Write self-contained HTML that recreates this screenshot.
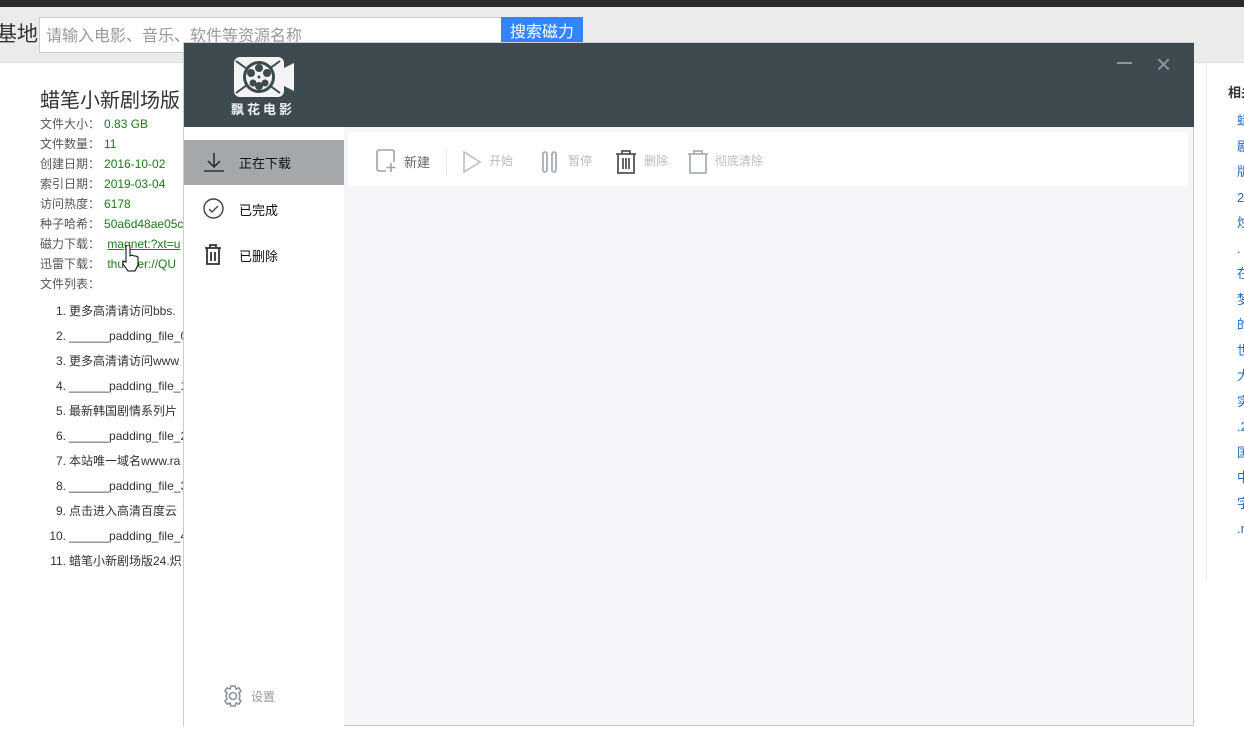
<!DOCTYPE html>
<html><head><meta charset="utf-8"><style>
*{margin:0;padding:0;box-sizing:border-box}
body{width:1244px;height:756px;overflow:hidden;background:#fff;font-family:"Liberation Sans","Noto Sans CJK SC",sans-serif;position:relative}
.a{position:absolute}
.lbl{font-size:12px;color:#555;line-height:20px;white-space:nowrap}
.lbl b{font-weight:normal;color:#1a7a1a;margin-left:4px}
.fl{font-size:12px;color:#333;line-height:25px}
.tb{font-size:12px;color:#bbb}
.r{font-size:13px;color:#1a6dc8;line-height:25.5px}
</style></head><body>
<div class="a" style="left:0;top:0;width:1244px;height:7px;background:#2b2b2b"></div>
<div class="a" style="left:0;top:7px;width:1244px;height:56px;background:#ebebeb;border-bottom:1px solid #ddd"></div>
<div class="a" style="left:-4px;top:18px;font-size:21px;color:#333">基地</div>
<div class="a" style="left:39px;top:17px;width:463px;height:36px;background:#fff;border:1px solid #ccc;font-size:16px;color:#999;padding:4px 6px">请输入电影、音乐、软件等资源名称</div>
<div class="a" style="left:501px;top:17px;width:82px;height:36px;background:#3385ff;color:#fff;font-size:16px;text-align:center;line-height:32px">搜索磁力</div>

<div class="a" style="left:40px;top:84px;font-size:20px;color:#333">蜡笔小新剧场版</div>
<div class="a lbl" style="left:40px;top:114px">文件大小：<b>0.83 GB</b><br>文件数量：<b>11</b><br>创建日期：<b>2016-10-02</b><br>索引日期：<b>2019-03-04</b><br>访问热度：<b>6178</b><br>种子哈希：<b>50a6d48ae05c</b><br>磁力下载： <b style="text-decoration:underline">magnet:?xt=u</b><br>迅雷下载： <b>thunder://QU</b><br>文件列表：</div>
<div class="a fl" style="left:46px;top:299px;text-align:right;width:20px">1.<br>2.<br>3.<br>4.<br>5.<br>6.<br>7.<br>8.<br>9.<br>10.<br>11.</div>
<div class="a fl" style="left:69px;top:299px;white-space:nowrap">更多高清请访问bbs.<br>______padding_file_0<br>更多高清请访问www<br>______padding_file_1<br>最新韩国剧情系列片<br>______padding_file_2<br>本站唯一域名www.ra<br>______padding_file_3<br>点击进入高清百度云<br>______padding_file_4<br>蜡笔小新剧场版24.炽</div>

<div class="a" style="left:1206px;top:63px;width:1px;height:518px;background:#e6e6e6"></div>
<div class="a" style="left:1228px;top:82px;font-size:13px;font-weight:bold;color:#333;white-space:nowrap">相关</div>
<div class="a r" style="left:1237px;top:108px">蜡<br>剧<br>版<br>2<br>烛<br>.<br>在<br>梦<br>的<br>世<br>大<br>实<br>.2<br>国<br>中<br>字<br>.m</div>

<div class="a" style="left:183px;top:42px;width:1011px;height:684px;border:1px solid #ccc;background:#f5f6fa">
 <div class="a" style="left:0;top:0;width:1010px;height:84px;background:#3d4a50"></div>
 <svg class="a" style="left:48px;top:12px" width="64" height="44" viewBox="0 0 64 44">
  <rect x="2" y="2" width="50" height="40" rx="6" fill="#f4f4f4"/>
  <polygon points="50,14 62,8 62,36 50,30" fill="#f4f4f4"/>
  <path d="M4 6 L48 38 M48 6 L4 38" stroke="#3d4a50" stroke-width="2"/>
  <circle cx="27" cy="22" r="16" fill="#3d4a50"/>
  <circle cx="27" cy="22" r="13" fill="#f4f4f4"/>
  <circle cx="27" cy="13" r="4" fill="#3d4a50"/><circle cx="27" cy="31" r="4" fill="#3d4a50"/>
  <circle cx="19" cy="18" r="4" fill="#3d4a50"/><circle cx="35" cy="18" r="4" fill="#3d4a50"/>
  <circle cx="21" cy="28" r="3.5" fill="#3d4a50"/><circle cx="33" cy="28" r="3.5" fill="#3d4a50"/>
  <circle cx="27" cy="22" r="1.5" fill="#3d4a50"/>
 </svg>
 <div class="a" style="left:47px;top:56px;color:#f4f4f4;font-size:13px;font-weight:bold;letter-spacing:3px">飘花电影</div>
 <div class="a" style="left:933px;top:19px;width:15px;height:2px;background:#8a9aa3"></div>
 <div class="a" style="left:972px;top:6px;color:#8a9aa3;font-size:26px">×</div>
 <div class="a" style="left:0;top:84px;width:160px;height:599px;background:#fff"></div>
 <div class="a" style="left:0;top:97px;width:160px;height:45px;background:#a5a8ab"></div>
 <svg class="a" style="left:19px;top:108px" width="22" height="22" viewBox="0 0 22 22" fill="none" stroke="#333" stroke-width="1.6"><path d="M11 2v13M5 10l6 6 6-6M1 20h20"/></svg>
 <div class="a" style="left:55px;top:110px;font-size:13px;color:#111">正在下载</div>
 <svg class="a" style="left:19px;top:155px" width="21" height="21" viewBox="0 0 21 21" fill="none" stroke="#444" stroke-width="1.4"><circle cx="10.5" cy="10.5" r="9.5"/><path d="M6 11l3 3 6-6"/></svg>
 <div class="a" style="left:55px;top:157px;font-size:13px;color:#111">已完成</div>
 <svg class="a" style="left:20px;top:201px" width="18" height="22" viewBox="0 0 18 22" fill="none" stroke="#333" stroke-width="1.8"><path d="M1 4h16M6 4V1h6v3M3 4v16h12V4M7 8v9M11 8v9"/></svg>
 <div class="a" style="left:55px;top:203px;font-size:13px;color:#111">已删除</div>
 <svg class="a" style="left:37px;top:641px" width="24" height="24" viewBox="0 0 24 24" fill="none" stroke="#8a9299" stroke-width="1.6"><circle cx="12" cy="12" r="3.5"/><path d="M10 2h4l1 3 3-1 2 3-2 2 1 3-1 3 2 2-2 3-3-1-1 3h-4l-1-3-3 1-2-3 2-2-1-3 1-3-2-2 2-3 3 1z"/></svg>
 <div class="a" style="left:67px;top:645px;font-size:12px;color:#999">设置</div>
 <div class="a" style="left:164px;top:89px;width:840px;height:54px;background:#fff"></div>
 <svg class="a" style="left:192px;top:106px" width="22" height="24" viewBox="0 0 22 24" fill="none" stroke="#9aa3ab" stroke-width="1.6"><path d="M10 22H3a2 2 0 0 1-2-2V3a2 2 0 0 1 2-2h13a2 2 0 0 1 2 2v10M15 14v9M10.5 18.5h9"/></svg>
 <div class="a" style="left:220px;top:109px;font-size:13px;color:#666">新建</div>
 <div class="a" style="left:262px;top:106px;width:1px;height:26px;background:#e3e6ea"></div>
 <svg class="a" style="left:278px;top:107px" width="20" height="24" viewBox="0 0 20 24" fill="none" stroke="#b8c0c7" stroke-width="1.6"><path d="M2 2l16 10L2 22z"/></svg>
 <div class="a tb" style="left:305px;top:109px">开始</div>
 <svg class="a" style="left:357px;top:107px" width="18" height="24" viewBox="0 0 18 24" fill="none" stroke="#a5adb5" stroke-width="1.8"><rect x="2" y="2" width="4" height="20" rx="2"/><rect x="11" y="2" width="4" height="20" rx="2"/></svg>
 <div class="a tb" style="left:384px;top:109px">暂停</div>
 <svg class="a" style="left:431px;top:106px" width="22" height="26" viewBox="0 0 22 26" fill="none" stroke="#555" stroke-width="1.8"><path d="M1 5h20M7 5V2h8v3M3 5v19h16V5M8 9v11M11 9v11M14 9v11"/></svg>
 <div class="a tb" style="left:460px;top:109px">删除</div>
 <svg class="a" style="left:503px;top:106px" width="22" height="26" viewBox="0 0 22 26" fill="none" stroke="#a8b0b8" stroke-width="1.8"><path d="M1 5h20M7 5V2h8v3M3 5v19h16V5"/></svg>
 <div class="a tb" style="left:531px;top:109px">彻底清除</div>
</div>
<svg class="a" style="left:120px;top:245px" width="22" height="28" viewBox="0 0 22 28"><path d="M6 2a2 2 0 0 1 4 0v9l2-1 2 1 2 0 2 1v8l-3 6H8l-5-7 0-3 3 1z" fill="#fff" stroke="#000" stroke-width="1"/></svg>
</body></html>
